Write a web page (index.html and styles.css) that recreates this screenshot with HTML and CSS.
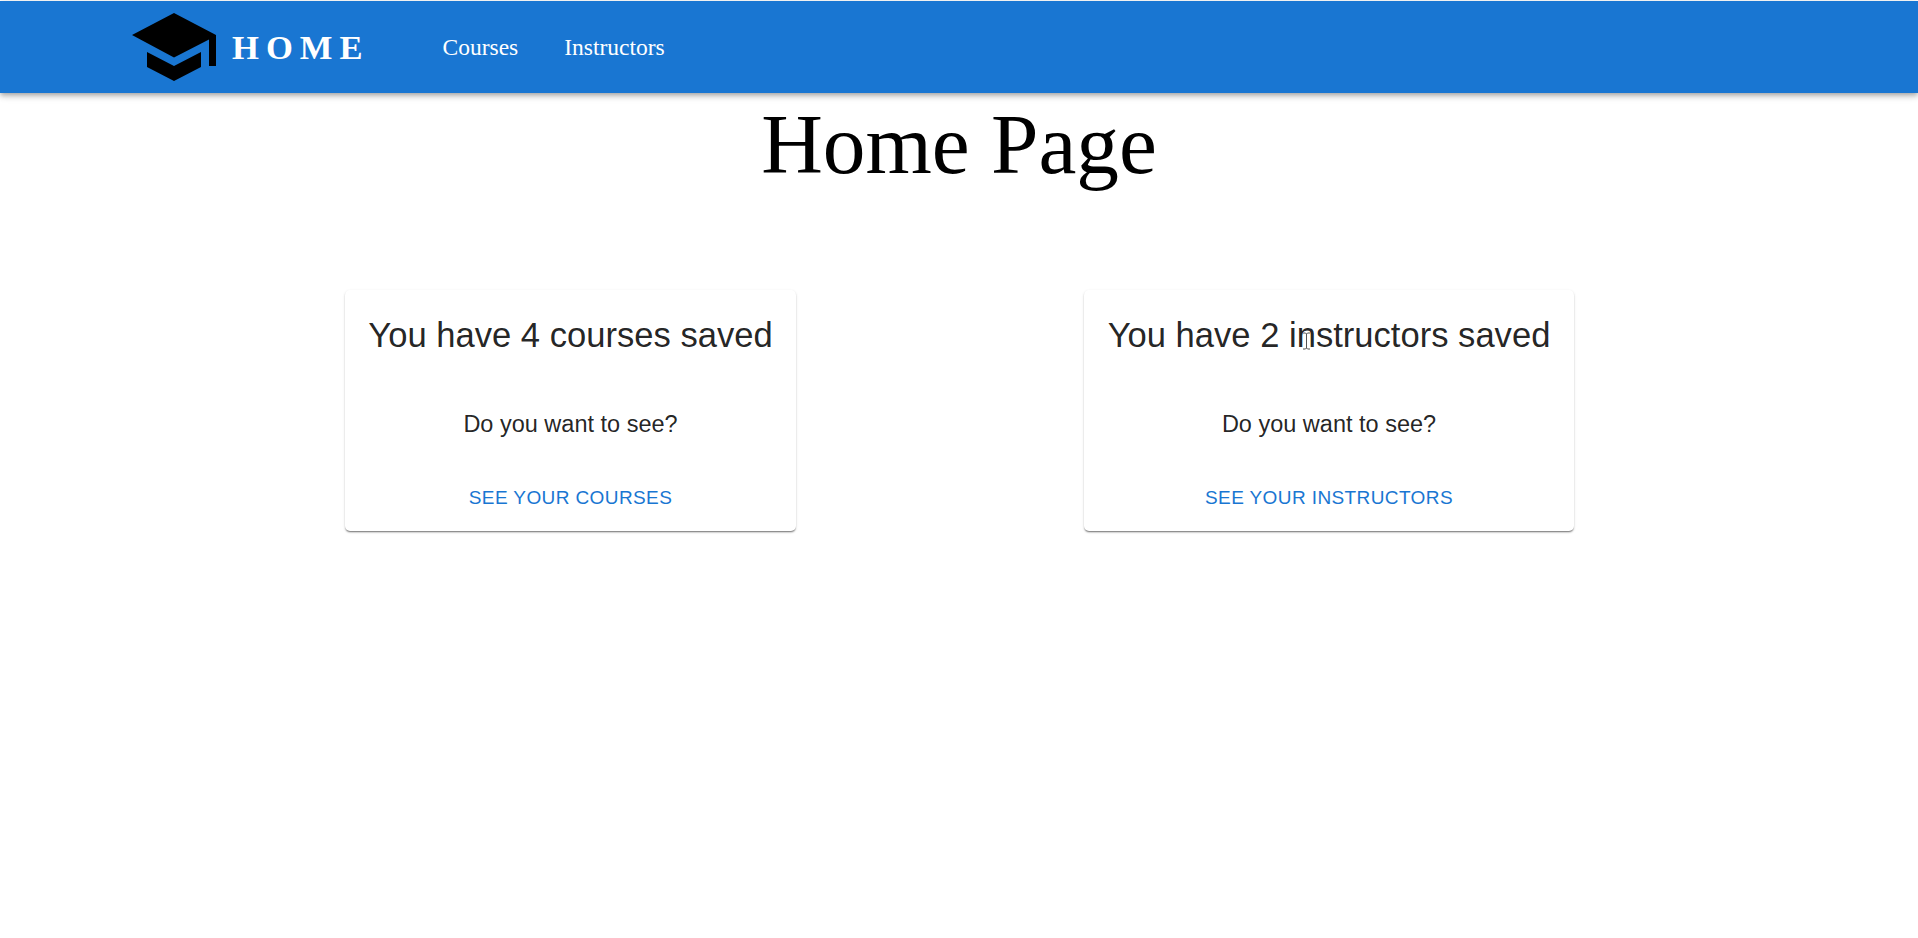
FILE: index.html
```html
<!DOCTYPE html>
<html lang="en">
<head>
<meta charset="utf-8">
<title>Home</title>
<link rel="stylesheet" href="styles.css">
</head>
<body>
<header class="appbar">
  <div class="toolbar">
    <svg class="logo" viewBox="0 0 84 68" aria-hidden="true">
      <path d="M42 0 L84 22 V53 H77 V26.5 L42 44.5 L0 22 Z" fill="#000"/>
      <path d="M15 39 L42 53 L69 39 V54 L42 68 L15 54 Z" fill="#000"/>
    </svg>
    <span class="brand">HOME</span>
    <nav class="nav">
      <a class="nav-link">Courses</a>
      <a class="nav-link">Instructors</a>
    </nav>
  </div>
</header>
<main>
  <h1 class="title">Home Page</h1>
  <section class="cards">
    <article class="card card-left">
      <h2 class="card-title">You have 4 courses saved</h2>
      <p class="card-text">Do you want to see?</p>
      <a class="card-action">See your courses</a>
    </article>
    <article class="card card-right">
      <h2 class="card-title">You have 2 instructors saved</h2>
      <p class="card-text">Do you want to see?</p>
      <a class="card-action">See your instructors</a>
      <svg class="cursor" viewBox="0 0 9 18" aria-hidden="true">
        <path d="M1 1 H3.5 L4.5 2 L5.5 1 H8 M4.5 2 V16 M1 17 H3.5 L4.5 16 L5.5 17 H8" fill="none" stroke="#fff" stroke-width="2.4"/>
        <path d="M1 1 H3.5 L4.5 2 L5.5 1 H8 M4.5 2 V16 M1 17 H3.5 L4.5 16 L5.5 17 H8" fill="none" stroke="#555" stroke-width="1"/>
      </svg>
    </article>
  </section>
</main>
</body>
</html>
```
FILE: styles.css
```css
* { box-sizing: border-box; }
html, body { margin: 0; padding: 0; background: #fff; }
body { height: 938px; overflow: hidden; padding-top: 1px; font-family: "Liberation Serif", serif; }
.appbar {
  height: 92px;
  background: #1976d2;
  color: #fff;
  box-shadow: 0 2px 4px -1px rgba(0,0,0,.2), 0 4px 5px 0 rgba(0,0,0,.14), 0 1px 10px 0 rgba(0,0,0,.12);
  position: relative;
}
.toolbar { display: flex; align-items: center; height: 92px; padding-left: 132px; }
.logo { width: 84px; height: 68px; margin-right: 16px; }
.brand { font-size: 34.6px; font-weight: 700; letter-spacing: 7px; margin-right: 73px; }
.nav { display: flex; gap: 46px; padding-top: 1px; }
.nav-link { font-size: 23.5px; color: #fff; }
.title { margin: 0; padding-top: 1px; text-align: center; font-size: 85.33px; font-weight: 400; line-height: 101px; }
.cards { display: flex; padding-left: 345px; margin-top: 95px; }
.card {
  height: 241px;
  background: #fff;
  border-radius: 5px;
  box-shadow: 0 2px 2px -1px rgba(0,0,0,.4), 0 1px 1px 0 rgba(0,0,0,.14), 0 1px 3px 0 rgba(0,0,0,.12);
  font-family: "Liberation Sans", sans-serif;
  text-align: center;
  display: flex;
  flex-direction: column;
  align-items: center;
}
.card-left { width: 451px; margin-right: 288px; }
.card-right { width: 490px; position: relative; }
.card-title { margin: 24px 0 0; font-size: 34.6px; font-weight: 400; line-height: 42px; color: rgba(0,0,0,.87); }
.card-text { margin: 54px 0 0; font-size: 23.5px; line-height: 28px; color: rgba(0,0,0,.87); }
.card-action { margin-top: 47px; font-size: 19px; line-height: 26px; letter-spacing: .4px; color: #1976d2; text-transform: uppercase; }
.cursor { position: absolute; left: 218px; top: 42px; width: 9px; height: 18px; }
```
